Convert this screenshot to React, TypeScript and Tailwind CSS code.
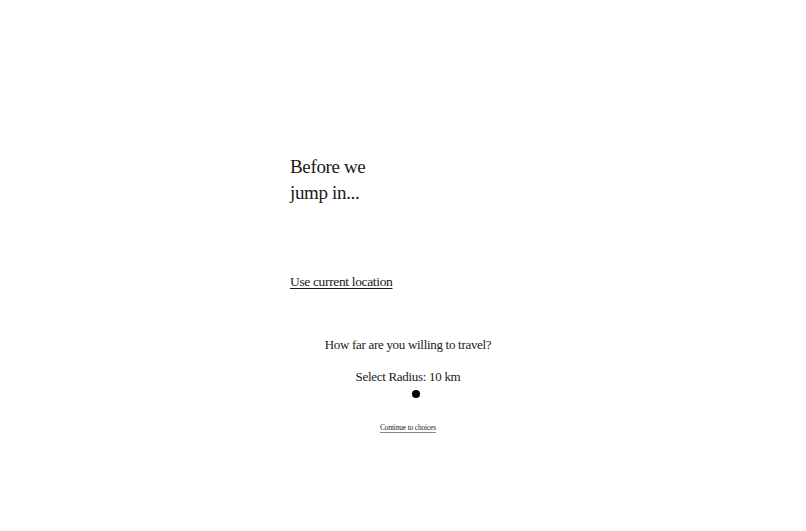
export default function App() {
  return (
    <div className="min-h-[531px] w-full bg-white text-[#1a1a1a] [font-family:'Liberation_Serif',serif]">
      <div className="ml-[290px] flex w-[236px] flex-col pt-[154px]">
        <h1 className="text-[19px] leading-[26px] font-normal tracking-[-0.35px]">
          Before we
          <br />
          jump in...
        </h1>
        <div className="mt-[66px] text-[13.5px] leading-[20px] tracking-[-0.35px]">
          <a href="#" className="underline decoration-1 underline-offset-2">
            Use current location
          </a>
        </div>
        <p className="mt-[43px] text-center text-[13px] leading-[20px] tracking-[-0.3px]">
          How far are you willing to travel?
        </p>
        <p className="mt-[12px] text-center text-[13px] leading-[20px] tracking-[-0.3px]">
          Select Radius: 10 km
        </p>
        <div className="mt-[2.5px] flex justify-center">
          <div className="ml-[16px] h-[8px] w-[8px] rounded-full bg-black" />
        </div>
        <div className="mt-[25px] flex justify-center">
          <a
            href="#"
            className="text-[7.4px] leading-[10px] tracking-[-0.15px] underline decoration-[#888] underline-offset-2"
          >
            Continue to choices
          </a>
        </div>
      </div>
    </div>
  );
}
